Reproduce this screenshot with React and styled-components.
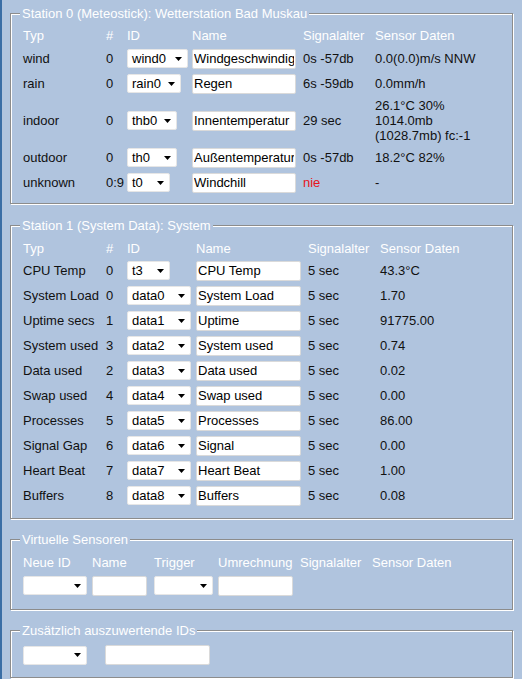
import React from 'react'
import styled, {createGlobalStyle} from 'styled-components'

const GlobalStyle = createGlobalStyle`
  html, body {
    margin: 0;
    padding: 0;
    background: #b0c4de;
  }
  body {
    font-family: "Liberation Sans", Arial, sans-serif;
    font-size: 13px;
    color: #111;
  }
`;

const Page = styled.div`
  border-left: 2px solid #3a6ea5;
  min-height: 100vh;
  box-sizing: border-box;
  padding: 6px 9px 0 8px;
  overflow: hidden;
`;

const Fieldset = styled.fieldset`
  margin: 0 0 ${props => props.$gap || 13}px;
  padding: ${props => props.$pad || '4px 12px 8px'};
  border: 1px solid #8c8c8c;
  box-shadow: 1px 1px 0 #fff, inset 1px 1px 0 #fff;
  min-width: 0;
`;

const Legend = styled.legend`
  margin-left: -3px;
  padding: 0 2px;
  line-height: 15px;
  color: #fff;
  background: #b0c4de;
`;

const Table = styled.div`
  display: grid;
  grid-template-columns: ${props => props.$cols};
  grid-template-rows: ${props => props.$head || 21}px;
  grid-auto-rows: minmax(25px, auto);
  align-items: center;
  line-height: 15px;
`;

const Row = styled.div`
  display: contents;
`;

const Head = styled.div`
  color: #fff;
  white-space: nowrap;
`;

const Cell = styled.div`
  white-space: nowrap;
  padding: 2px 0;
  color: ${props => props.$red ? '#e8141b' : '#111'};
`;

const Dropdown = styled.div`
  display: flex;
  align-items: center;
  justify-content: space-between;
  box-sizing: border-box;
  width: ${props => props.$w}px;
  height: 19px;
  padding: 0 5px 0 4px;
  background: #fff;
  border: 1px solid #e6e6e6;
  border-radius: 2px;
  color: #000;
`;

const TextBox = styled.input`
  box-sizing: border-box;
  width: ${props => props.$w}px;
  height: 20px;
  margin: 0;
  padding: 0 1px;
  border: 1px solid #dadada;
  border-radius: 2px;
  background: #fff;
  font-family: "Liberation Sans", Arial, sans-serif;
  font-size: 13px;
  color: #000;
  outline: none;
`;

const ExtraRow = styled.div`
  display: flex;
  align-items: center;
  gap: 18px;
`;

function Select({w, value}) {
  return (
    <Dropdown $w={w}>
      <span>{value}</span>
      <svg width="7" height="4" viewBox="0 0 7 4">
        <polygon points="0,0 7,0 3.5,4" fill="#000" />
      </svg>
    </Dropdown>
  )
}

const station0 = [
  {typ: 'wind', nr: '0', id: 'wind0', w: 61, name: 'Windgeschwindigkeit', age: '0s -57db', data: ['0.0(0.0)m/s NNW']},
  {typ: 'rain', nr: '0', id: 'rain0', w: 54, name: 'Regen', age: '6s -59db', data: ['0.0mm/h']},
  {typ: 'indoor', nr: '0', id: 'thb0', w: 50, name: 'Innentemperatur', age: '29 sec', data: ['26.1°C 30%', '1014.0mb', '(1028.7mb) fc:-1']},
  {typ: 'outdoor', nr: '0', id: 'th0', w: 50, name: 'Außentemperatur', age: '0s -57db', data: ['18.2°C 82%']},
  {typ: 'unknown', nr: '0:9', id: 't0', w: 43, name: 'Windchill', age: 'nie', red: true, data: ['-']},
]

const station1 = [
  {typ: 'CPU Temp', nr: '0', id: 't3', w: 43, name: 'CPU Temp', data: '43.3°C'},
  {typ: 'System Load', nr: '0', id: 'data0', w: 64, name: 'System Load', data: '1.70'},
  {typ: 'Uptime secs', nr: '1', id: 'data1', w: 64, name: 'Uptime', data: '91775.00'},
  {typ: 'System used', nr: '3', id: 'data2', w: 64, name: 'System used', data: '0.74'},
  {typ: 'Data used', nr: '2', id: 'data3', w: 64, name: 'Data used', data: '0.02'},
  {typ: 'Swap used', nr: '4', id: 'data4', w: 64, name: 'Swap used', data: '0.00'},
  {typ: 'Processes', nr: '5', id: 'data5', w: 64, name: 'Processes', data: '86.00'},
  {typ: 'Signal Gap', nr: '6', id: 'data6', w: 64, name: 'Signal', data: '0.00'},
  {typ: 'Heart Beat', nr: '7', id: 'data7', w: 64, name: 'Heart Beat', data: '1.00'},
  {typ: 'Buffers', nr: '8', id: 'data8', w: 64, name: 'Buffers', data: '0.08'},
]

function HeadRow() {
  return (
    <Row>
      <Head>Typ</Head>
      <Head>#</Head>
      <Head>ID</Head>
      <Head>Name</Head>
      <Head>Signalalter</Head>
      <Head>Sensor Daten</Head>
    </Row>
  )
}

export default function App() {
  return (
    <>
      <GlobalStyle />
      <Page>
        <Fieldset $gap={14}>
          <Legend>Station 0 (Meteostick): Wetterstation Bad Muskau</Legend>
          <Table $cols="83px 21px 65px 111px 72px 1fr">
            <HeadRow />
            {station0.map(s => (
              <Row key={s.typ}>
                <Cell>{s.typ}</Cell>
                <Cell>{s.nr}</Cell>
                <Cell><Select w={s.w} value={s.id} /></Cell>
                <Cell><TextBox $w={104} defaultValue={s.name} /></Cell>
                <Cell $red={s.red}>{s.age}</Cell>
                <Cell>{s.data.map((d, i) => <div key={i}>{d}</div>)}</Cell>
              </Row>
            ))}
          </Table>
        </Fieldset>

        <Fieldset $pad="5px 12px 10px">
          <Legend>Station 1 (System Data): System</Legend>
          <Table $cols="83px 21px 69px 112px 72px 1fr" $head={20}>
            <HeadRow />
            {station1.map(s => (
              <Row key={s.typ}>
                <Cell>{s.typ}</Cell>
                <Cell>{s.nr}</Cell>
                <Cell><Select w={s.w} value={s.id} /></Cell>
                <Cell><TextBox $w={105} defaultValue={s.name} /></Cell>
                <Cell>5 sec</Cell>
                <Cell>{s.data}</Cell>
              </Row>
            ))}
          </Table>
        </Fieldset>

        <Fieldset $pad="5px 12px 11px">
          <Legend>Virtuelle Sensoren</Legend>
          <Table $cols="69px 62px 64px 82px 72px 1fr">
            <Row>
              <Head>Neue ID</Head>
              <Head>Name</Head>
              <Head>Trigger</Head>
              <Head>Umrechnung</Head>
              <Head>Signalalter</Head>
              <Head>Sensor Daten</Head>
            </Row>
            <Row>
              <Cell><Select w={64} value="" /></Cell>
              <Cell><TextBox $w={55} defaultValue="" /></Cell>
              <Cell><Select w={59} value="" /></Cell>
              <Cell><TextBox $w={75} defaultValue="" /></Cell>
              <Cell />
              <Cell />
            </Row>
          </Table>
        </Fieldset>

        <Fieldset $pad="7px 12px 12px">
          <Legend>Zusätzlich auszuwertende IDs</Legend>
          <ExtraRow>
            <Select w={64} value="" />
            <TextBox $w={105} defaultValue="" />
          </ExtraRow>
        </Fieldset>
      </Page>
    </>
  )
}
